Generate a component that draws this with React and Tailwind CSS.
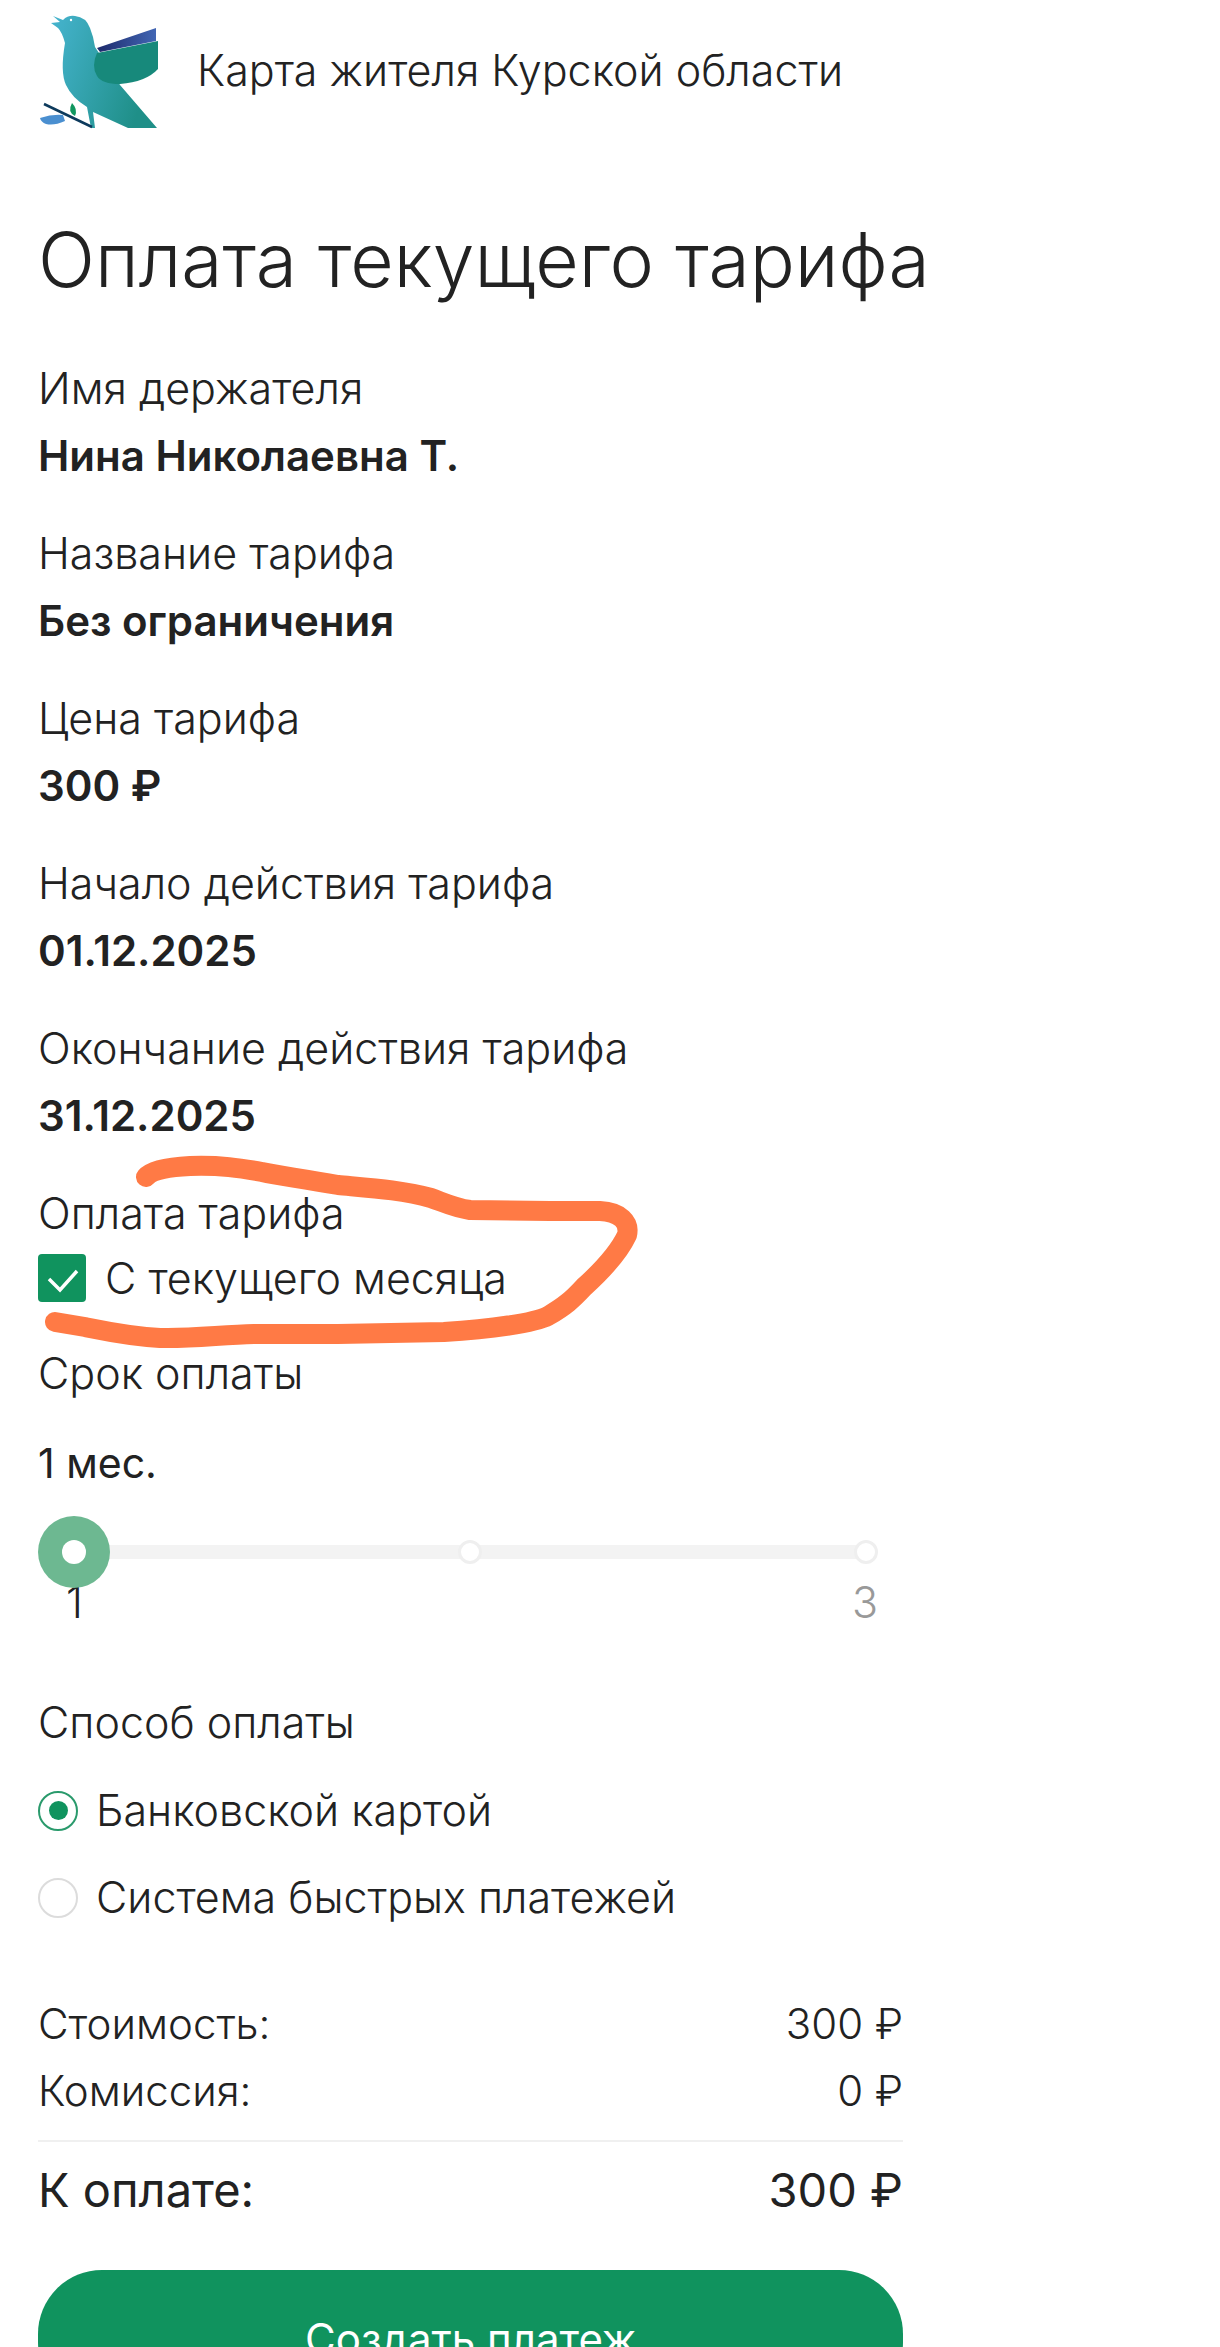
import React from "react";

const font = { fontFamily: '"Inter", "Noto Sans", sans-serif' };

function Logo() {
  return (
    <svg width="120" height="116" viewBox="38 14 120 116" className="shrink-0">
      <defs>
        <linearGradient id="body" x1="0" y1="0" x2="1" y2="0.35">
          <stop offset="0" stopColor="#46b4cf" />
          <stop offset="1" stopColor="#1f8f88" />
        </linearGradient>
        <linearGradient id="feather" x1="0" y1="0" x2="1" y2="0">
          <stop offset="0" stopColor="#1d2a6b" />
          <stop offset="1" stopColor="#4266b4" />
        </linearGradient>
      </defs>
      <path d="M53 16 L63 20 Q68 15 75 16 Q86 17 90 28 L93 37 L95 47 L120 85 L157 128 L128 128 L93 112 L95 128 L91 128 L87 107 Q72 98 66 85 Q60 72 65 43 Q62 32 58 28 L51 23 L60 22 Z" fill="url(#body)" />
      <path d="M97 48 L156 28 L156 41 L100 52 Z" fill="url(#feather)" />
      <path d="M97 53 L158 41 L158 69 Q146 82 120 84 Q102 84 97 76 Q91 66 97 53 Z" fill="#17897b" />
      <path d="M44 104 L92 127" stroke="#0d3a5c" strokeWidth="2.5" />
      <path d="M72 103 Q78 109 75 116 Q67 112 72 103 Z" fill="#10965f" />
      <path d="M40 118 Q52 114 63 115 L65 121 Q54 126 46 124 Q41 122 40 118 Z" fill="#4a8fd0" />
      <circle cx="71" cy="20" r="1.2" fill="#ffffff" />
    </svg>
  );
}

function Field({ label, value }) {
  return (
    <div className="h-[165px]">
      <div className="h-[67px] text-[43px] leading-[67px] font-light text-[#222]">{label}</div>
      <div className="h-[67px] text-[42px] leading-[67px] font-semibold text-[#222]">{value}</div>
    </div>
  );
}

function Radio({ checked, label }) {
  return (
    <div className="h-[87px] flex items-center gap-[18px]">
      <div className={"w-[40px] h-[40px] rounded-full border-2 flex items-center justify-center " + (checked ? "border-[#2a9a6c]" : "border-[#dcdcdc]")}>
        {checked && <div className="w-[19px] h-[19px] rounded-full bg-[#10935e]" />}
      </div>
      <div className="text-[43px] font-light text-[#222]">{label}</div>
    </div>
  );
}

export default function App() {
  return (
    <div className="relative h-[2347px] overflow-hidden bg-white text-[#222]" style={font}>
      <div className="w-[903px] pl-[38px]">
        {/* Header */}
        <div className="h-[130px] pt-[14px] flex items-center gap-[39px]">
          <Logo />
          <div className="text-[43px] font-light pb-[4px]">Карта жителя Курской области</div>
        </div>

        <h1 className="mt-[80px] h-[100px] text-[75px] leading-[100px] font-light whitespace-nowrap">Оплата текущего тарифа</h1>

        <div className="mt-[45px]">
          <Field label="Имя держателя" value="Нина Николаевна Т." />
          <Field label="Название тарифа" value="Без ограничения" />
          <Field label="Цена тарифа" value="300 ₽" />
          <Field label="Начало действия тарифа" value="01.12.2025" />
          <Field label="Окончание действия тарифа" value="31.12.2025" />
        </div>

        {/* Оплата тарифа */}
        <div className="h-[67px] text-[43px] leading-[67px] font-light">Оплата тарифа</div>
        <div className="mt-[3px] h-[56px] flex items-center gap-[19px]">
          <div className="w-[48px] h-[48px] rounded bg-[#10935e]">
            <svg width="48" height="48" viewBox="0 0 48 48" fill="none">
              <path d="M11 25 L22 36 L39 17" stroke="#fff" strokeWidth="3.5" />
            </svg>
          </div>
          <div className="text-[43px] font-light">С текущего месяца</div>
        </div>

        <div className="mt-[34px] h-[67px] text-[43px] leading-[67px] font-light">Срок оплаты</div>
        <div className="mt-[23px] h-[67px] text-[41px] leading-[67px] font-normal">1 мес.</div>

        {/* Slider */}
        <div className="relative mt-[19px] w-[828px] h-[72px] flex items-center pl-[36px]">
          <div className="w-full h-[14px] bg-[#f3f3f3]" />
          <div className="absolute left-0 top-0 w-[72px] h-[72px] rounded-full bg-[#6db891] flex items-center justify-center">
            <div className="w-[24px] h-[24px] rounded-full bg-white" />
          </div>
          <div className="absolute left-[420px] top-[24px] w-[24px] h-[24px] rounded-full bg-white border-[3px] border-[#efefef]" />
          <div className="absolute right-[-12px] top-[24px] w-[24px] h-[24px] rounded-full bg-white border-[3px] border-[#efefef]" />
        </div>
        <div className="-mt-[11px] w-[840px] h-[50px] flex justify-between text-[43px] leading-[50px] font-light pl-[28px]">
          <span>1</span>
          <span className="text-[#999]">3</span>
        </div>

        <div className="mt-[62px] h-[67px] text-[43px] leading-[67px] font-light">Способ оплаты</div>
        <div className="mt-[11px]">
          <Radio checked label="Банковской картой" />
          <Radio label="Система быстрых платежей" />
        </div>

        {/* Итог */}
        <div className="mt-[49px]">
          <div className="h-[67px] flex justify-between items-center text-[42px] font-light"><span>Стоимость:</span><span>300 ₽</span></div>
          <div className="h-[67px] flex justify-between items-center text-[42px] font-light"><span>Комиссия:</span><span>0 ₽</span></div>
          <div className="mt-[16px] h-[2px] bg-[#f0f0f0]" />
          <div className="mt-[15px] h-[67px] flex justify-between items-center text-[47px] font-normal"><span>К оплате:</span><span>300 ₽</span></div>
        </div>

        <button className="mt-[46px] w-full h-[136px] rounded-[64px] bg-[#10935e] text-white text-[42px] font-normal">Создать платеж</button>
      </div>

      {/* Маркер поверх скриншота */}
      <svg className="absolute left-0 top-0 pointer-events-none" width="1220" height="2347" fill="none">
        <path
          d="M146 1177 C152 1170 169 1167 190 1166 C220 1165 240 1168 262 1172 C280 1176 300 1178 338 1185 C370 1188 402 1190 431 1198 C445 1203 455 1208 470 1210 L550 1211 L600 1211 C620 1212 630 1222 627 1235 C620 1250 605 1268 584 1287 C572 1300 565 1306 548 1316 C535 1323 490 1329 444 1332 L338 1334 L254 1334 C220 1335 190 1339 160 1338 C127 1336 100 1330 85 1327 L55 1322"
          stroke="#ff7a45"
          strokeWidth="20"
          strokeLinecap="round"
          strokeLinejoin="round"
        />
      </svg>
    </div>
  );
}
